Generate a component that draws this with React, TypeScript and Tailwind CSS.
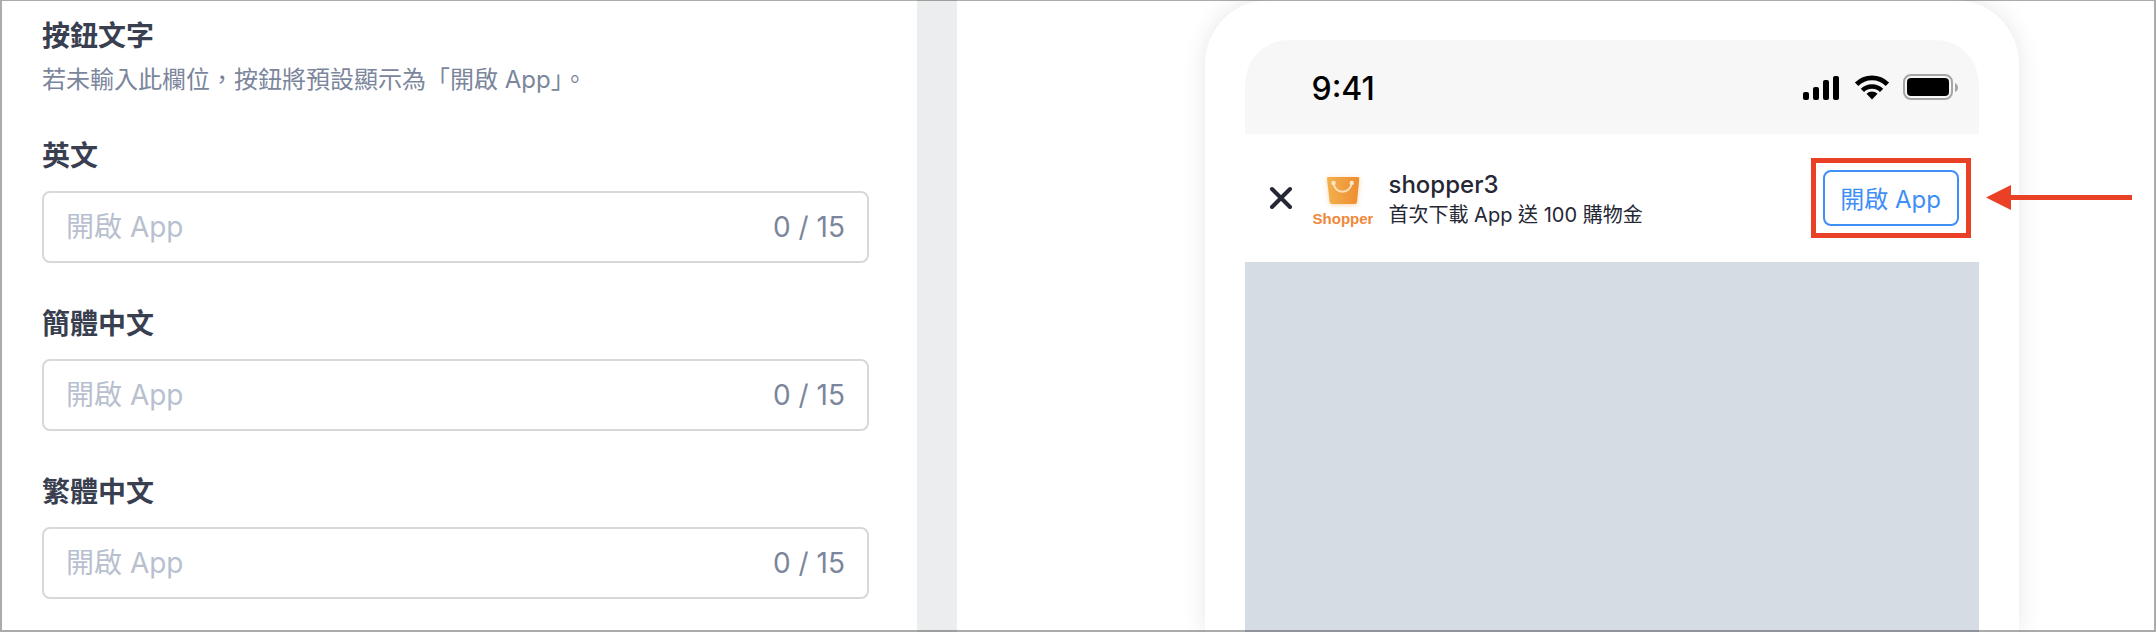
import { useState } from 'react'

const MAX_LENGTH = 15

const fields = [
  { id: 'en', label: '英文' },
  { id: 'zh-cn', label: '簡體中文' },
  { id: 'zh-tw', label: '繁體中文' },
]

function ButtonTextField({ id, label }: { id: string; label: string }) {
  const [value, setValue] = useState('')

  return (
    <div>
      <label htmlFor={id} className="block text-[28px] leading-10 font-semibold text-[#393f50]">
        {label}
      </label>
      <div className="mt-[15px] flex h-[72px] items-center rounded-lg border-2 border-[#d8d8d8] bg-white px-[22px] text-[28px]">
        <input
          id={id}
          type="text"
          value={value}
          maxLength={MAX_LENGTH}
          placeholder="開啟 App"
          onChange={(e) => setValue(e.target.value)}
          className="h-10 min-w-0 flex-1 bg-transparent text-[#393f50] outline-none placeholder:text-[#b8c0cf]"
        />
        <span className="text-[#7b869c]">
          {value.length} / {MAX_LENGTH}
        </span>
      </div>
    </div>
  )
}

function StatusIcons() {
  return (
    <svg width="155" height="26" viewBox="0 0 155 26" fill="none" aria-hidden="true">
      {/* Signal */}
      <rect x="0" y="18" width="6" height="8" rx="2" fill="#000" />
      <rect x="10" y="13" width="6" height="13" rx="2" fill="#000" />
      <rect x="20" y="6" width="6" height="20" rx="2" fill="#000" />
      <rect x="30" y="2" width="6" height="24" rx="2" fill="#000" />
      {/* Wifi */}
      <path d="M53.6 10.2A22 22 0 0 1 84.4 10.2" stroke="#000" strokeWidth="4.8" />
      <path d="M59.4 16.4A13.6 13.6 0 0 1 78.6 16.4" stroke="#000" strokeWidth="4.6" />
      <path d="M69 25.4L63.5 19.8A8 8 0 0 1 74.5 19.8Z" fill="#000" />
      {/* Battery */}
      <rect x="101" y="1" width="48" height="24" rx="7" stroke="#a5a5a5" strokeWidth="2" />
      <rect x="104" y="4" width="42" height="18" rx="4" fill="#000" />
      <path d="M152 9C154 10 155 11.500 155 13.500S154 17 152 18Z" fill="#a5a5a5" />
    </svg>
  )
}

function ShopperLogo() {
  return (
    <svg width="60" height="60" viewBox="0 0 60 60" fill="none" className="shrink-0" role="img" aria-label="Shopper">
      <defs>
        <linearGradient id="bag" x1="14" y1="0" x2="46" y2="0" gradientUnits="userSpaceOnUse">
          <stop stopColor="#f3b04f" />
          <stop offset="1" stopColor="#ee8d30" />
        </linearGradient>
        <filter id="glow" x="-30%" y="-30%" width="160%" height="170%">
          <feDropShadow dx="0" dy="1" stdDeviation="2.500" floodColor="#f0a050" floodOpacity="0.45" />
        </filter>
      </defs>
      <path
        d="M15 9H45Q46.500 9 46.300 10.500L44 34Q43.800 36 42 36H18.500Q17 36 16.700 34L14 10.500Q13.800 9 15 9Z"
        fill="url(#bag)"
        filter="url(#glow)"
      />
      <path d="M20.500 15C21.500 26.500 37.500 26.500 38.700 15" stroke="#fce0b8" strokeWidth="2" />
      <circle cx="20.500" cy="15" r="2.200" fill="#fce6c8" />
      <circle cx="38.700" cy="15" r="2.200" fill="#fce6c8" />
      <text x="30" y="56" textAnchor="middle" fill="#f0883a" className="font-['Liberation_Sans'] text-[15px] font-bold">
        Shopper
      </text>
    </svg>
  )
}

function PhonePreview() {
  return (
    <div className="flex w-[814px] flex-col rounded-t-[64px] bg-white px-10 pt-10 shadow-[0_0_24px_rgba(0,0,0,0.1)]">
      {/* Status bar */}
      <div className="flex h-[94px] items-center justify-between rounded-t-[44px] bg-[#f7f7f7] pr-[21px] pl-[67px]">
        <span className="pt-1 text-[32px] leading-10 font-medium text-black">9:41</span>
        <StatusIcons />
      </div>

      {/* App banner */}
      <div className="flex h-32 items-center pr-5 pl-6">
        <button type="button" aria-label="關閉" className="shrink-0">
          <svg width="24" height="24" viewBox="0 0 24 24" fill="none" stroke="#252735" strokeWidth="4" strokeLinecap="round">
            <path d="M3 3L21 21M21 3L3 21" />
          </svg>
        </button>
        <div className="ml-5 flex flex-1 items-center gap-4">
          <ShopperLogo />
          <div className="pt-0.5 text-[#252735]">
            <p className="text-2xl leading-8 font-medium">shopper3</p>
            <p className="text-xl leading-7">首次下載 App 送 100 購物金</p>
          </div>
        </div>
        <div className="relative">
          <button
            type="button"
            className="h-14 w-[136px] rounded-lg border-2 border-[#3f8ff7] pt-1 text-2xl text-[#3f8ff7]"
          >
            開啟 App
          </button>
          {/* Callout */}
          <div className="pointer-events-none absolute -inset-3 border-[5px] border-[#ea4026]" />
          <svg
            width="146"
            height="26"
            viewBox="0 0 146 26"
            fill="#ea4026"
            className="pointer-events-none absolute inset-y-0 left-full my-auto ml-[27px]"
            aria-hidden="true"
          >
            <path d="M0 12.500L25 0V10H146V15H25V25Z" />
          </svg>
        </div>
      </div>

      <div className="flex-1 bg-[#d5dce4]" />
    </div>
  )
}

export default function App() {
  return (
    <div
      lang="zh-Hant"
      className="relative grid min-h-screen grid-cols-[917fr_40px_1199fr] overflow-hidden bg-white font-[Inter,'Noto_Sans_CJK_TC',sans-serif]"
    >
      {/* Settings */}
      <section className="pt-4 pr-12 pb-8 pl-[42px]">
        <h2 className="text-[28px] leading-10 font-semibold text-[#393f50]">按鈕文字</h2>
        <p className="mt-2 text-2xl leading-8 text-[#7b869c]">若未輸入此欄位，按鈕將預設顯示為「開啟 App」。</p>
        <div className="mt-10 flex flex-col gap-[41px]">
          {fields.map((field) => (
            <ButtonTextField key={field.id} id={field.id} label={field.label} />
          ))}
        </div>
      </section>

      <div className="bg-[#ebedee]" />

      {/* Preview */}
      <section className="flex justify-center overflow-hidden pl-[110px]">
        <PhonePreview />
      </section>

      <div className="pointer-events-none absolute inset-0 border-2 border-t border-black/33" />
    </div>
  )
}
